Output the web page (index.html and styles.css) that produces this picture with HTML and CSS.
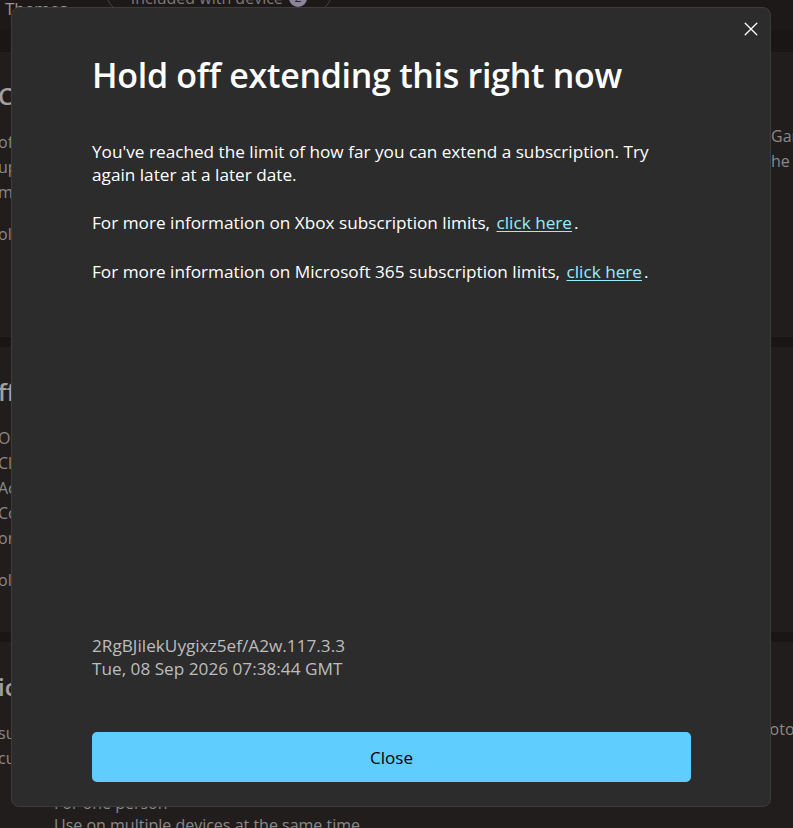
FILE: index.html
```html
<!DOCTYPE html>
<html lang="en">
<head>
<meta charset="utf-8">
<title>Hold off extending this right now</title>
<link rel="stylesheet" href="styles.css">
</head>
<body>
<div class="app">
  <div class="topbar">
    <span class="tab">Themes</span>
    <span class="pill">Included with device <span class="badge">2</span></span>
  </div>
  <div class="strip"></div>
  <section class="card card-one">
    <div class="col-left">
      <h2 class="bg-heading">Cloud storage</h2>
      <p class="bg-line">of storage for your files</p>
      <p class="bg-line">up to 6 people</p>
      <p class="bg-line">more features</p>
      <p class="bg-line gap">olden plan</p>
    </div>
    <div class="col-right">
      <p class="bg-line">Game Pass</p>
      <p class="bg-line">he first month</p>
    </div>
  </section>
  <section class="card card-two">
    <div class="col-left">
      <h2 class="bg-heading">ffice apps</h2>
      <p class="bg-line">OneDrive</p>
      <p class="bg-line">Clipchamp</p>
      <p class="bg-line">Access</p>
      <p class="bg-line">Copilot</p>
      <p class="bg-line">ore apps</p>
      <p class="bg-line gap">older plan</p>
    </div>
    <div class="col-right"></div>
  </section>
  <section class="card card-three">
    <div class="col-left">
      <h2 class="bg-heading">ic plan</h2>
      <p class="bg-line">subscription</p>
      <p class="bg-line">current</p>
      <p class="bg-line indent gap2">For one person</p>
      <p class="bg-line indent">Use on multiple devices at the same time.</p>
    </div>
    <div class="col-right">
      <p class="bg-line photo">photos</p>
    </div>
  </section>
</div>

<div class="dialog" role="dialog" aria-labelledby="dlg-title">
  <button class="close-x" aria-label="Close">
    <svg width="14" height="14" viewBox="0 0 14 14" aria-hidden="true">
      <path d="M1.2 1.2 L12.8 12.8 M12.8 1.2 L1.2 12.8" stroke="#ffffff" stroke-width="1.3" fill="none" stroke-linecap="round"/>
    </svg>
  </button>
  <div class="dlg-body">
    <h1 class="dlg-title" id="dlg-title">Hold off extending this right now</h1>
    <p class="dlg-text first">You've reached the limit of how far you can extend a subscription. Try again later at a later date.</p>
    <p class="dlg-text second">For more information on Xbox subscription limits, <a class="dlg-link" href="#">click here</a>.</p>
    <p class="dlg-text">For more information on Microsoft 365 subscription limits, <a class="dlg-link" href="#">click here</a>.</p>
  </div>
  <div class="dlg-meta">
    <div>2RgBJilekUygixz5ef/A2w.117.3.3</div>
    <div>Tue, 08 Sep 2026 07:38:44 GMT</div>
  </div>
  <button class="dlg-button">Close</button>
</div>
</body>
</html>
```
FILE: styles.css
```css
html, body {
  margin: 0;
  padding: 0;
  background: #1a1615;
  overflow: hidden;
}

body {
  font-family: "Open Sans", "Noto Sans", sans-serif;
  width: 793px;
  height: 828px;
}

/* ---------- dimmed background page ---------- */
.app {
  display: flex;
  flex-direction: column;
  height: 828px;
  overflow: hidden;
  color: #8b8988;
  background: #1a1615;
}

.topbar {
  height: 30px;
  background: #1d1918;
  display: flex;
  align-items: flex-start;
  gap: 38px;
  padding-left: 5px;
  overflow: hidden;
}

.tab {
  margin-top: -4px;
  font-size: 17px;
  line-height: 26px;
  color: #9a9796;
}

.pill {
  margin-top: -26px;
  height: 36px;
  padding: 0 24px;
  border: 1px solid #4a4645;
  border-radius: 19px;
  display: flex;
  align-items: flex-end;
  gap: 6px;
  font-size: 16px;
  line-height: 26px;
  color: #7d7a79;
}

.badge {
  width: 18px;
  height: 18px;
  border-radius: 50%;
  background: #8d839b;
  color: #2a2529;
  font-size: 12px;
  line-height: 18px;
  text-align: center;
  margin-bottom: 4px;
}

.strip {
  height: 22px;
  background: #1a1615;
}

.card {
  background: #211d1c;
  display: grid;
  grid-template-columns: 771px 1fr;
  overflow: hidden;
}

.card-one { height: 285px; }
.card-two { height: 285px; margin-top: 10px; }
.card-three { flex: 1; margin-top: 10px; }

.col-left {
  margin-left: -2px;
  padding-top: 28px;
  white-space: nowrap;
}

.col-right {
  white-space: nowrap;
}

.card-two .col-left { padding-top: 29px; }
.card-three .col-left { padding-top: 29px; }
.card-one .col-right { padding-top: 72px; }
.card-three .col-right { padding-top: 75px; }

.bg-heading {
  margin: 0 0 18px;
  font-size: 24px;
  line-height: 32px;
  font-weight: 600;
  color: #a3a09f;
}

.bg-line {
  margin: 0;
  font-size: 16px;
  line-height: 25px;
  color: #8b8988;
}

.bg-line.gap { margin-top: 17px; }
.bg-line.gap2 { margin-top: 21px; }
.bg-line.indent { padding-left: 56px; line-height: 22px; }
.bg-line.photo { margin-left: -21px; }

/* ---------- dialog ---------- */
.dialog {
  position: fixed;
  left: 11px;
  top: 7px;
  width: 760px;
  height: 800px;
  box-sizing: border-box;
  background: #2c2c2c;
  border: 1px solid #3c3c3c;
  border-radius: 8px;
  padding: 46px 79px 24px 80px;
  display: flex;
  flex-direction: column;
  color: #ffffff;
  font-family: "Open Sans", "Noto Sans", sans-serif;
}

.close-x {
  position: absolute;
  top: 13px;
  right: 11px;
  width: 16px;
  height: 16px;
  padding: 0;
  border: 0;
  background: transparent;
  display: flex;
  align-items: center;
  justify-content: center;
  cursor: pointer;
}

.dlg-body {
  flex: 1;
}

.dlg-title {
  margin: 0 0 44px;
  font-size: 34px;
  line-height: 42px;
  font-weight: 600;
  letter-spacing: -0.3px;
}

.dlg-text {
  margin: 0 0 26px;
  font-size: 17.2px;
  line-height: 23px;
}

.dlg-text.first { margin-bottom: 25px; }

.dlg-link {
  color: #99ebff;
  text-decoration: underline;
  text-underline-offset: 2px;
  padding: 0 2px;
}

.dlg-meta {
  font-size: 17.2px;
  line-height: 23px;
  color: #bdbdbd;
  margin-bottom: 52px;
}

.dlg-button {
  height: 50px;
  border: 0;
  border-radius: 5px;
  background: #60cdff;
  color: #000000;
  font-family: "Open Sans", "Noto Sans", sans-serif;
  font-size: 17px;
  cursor: pointer;
}
```
